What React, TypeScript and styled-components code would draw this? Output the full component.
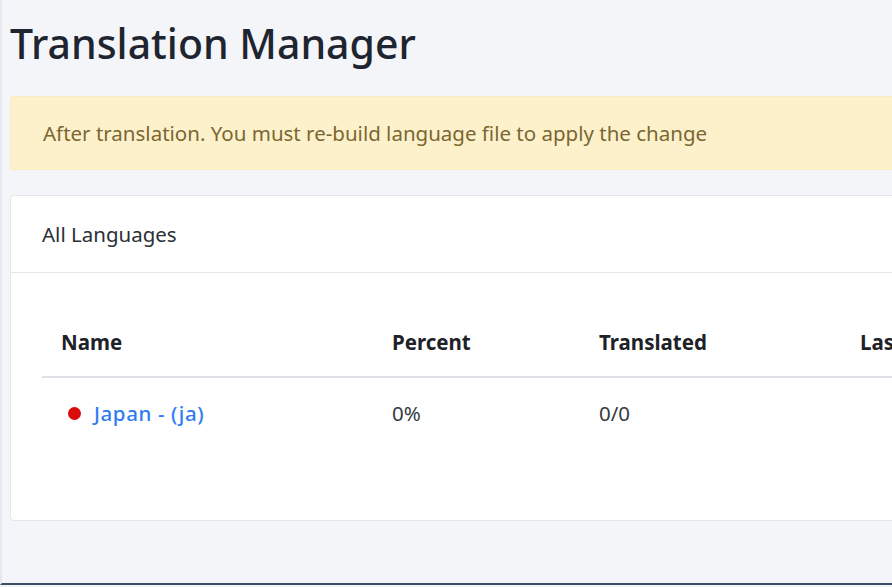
import styled, { createGlobalStyle } from "styled-components";

const GlobalStyle = createGlobalStyle`
  html, body {
    margin: 0;
    padding: 0;
    overflow: hidden;
    background: #f3f5f8;
  }
  body {
    font-family: "Noto Sans", "Open Sans", sans-serif;
    color: #212529;
  }
`;

const Page = styled.div`
  width: 1100px;
  height: 585px;
  box-sizing: border-box;
  border-left: 2px solid #e4e8f0;
  border-bottom: 2px solid #3d4a66;
  padding: 12px 0 0 8px;
`;

const Title = styled.h1`
  margin: 0 0 22px;
  font-size: 41px;
  font-weight: 500;
  line-height: 62px;
  color: #1f2530;
`;

const Alert = styled.div`
  background: #fdf1cc;
  border: 1px solid #fcebbf;
  border-radius: 3px;
  color: #7a6731;
  font-size: 20.5px;
  height: 74px;
  box-sizing: border-box;
  display: flex;
  align-items: center;
  padding: 0 32px;
  margin-bottom: 25px;
`;

const Card = styled.div`
  background: #fff;
  border: 1px solid #e3e6ea;
  border-radius: 4px;
  height: 326px;
  box-sizing: border-box;
`;

const CardHeader = styled.div`
  height: 77px;
  box-sizing: border-box;
  border-bottom: 1px solid #e3e6ea;
  display: flex;
  align-items: center;
  padding: 0 31px;
  font-size: 20.5px;
  color: #2b2f36;
`;

const CardBody = styled.div`
  padding: 34px 31px 0;
`;

const Table = styled.table`
  width: 100%;
  border-collapse: collapse;
  font-size: 20.5px;
`;

const Th = styled.th<{ w?: number }>`
  text-align: left;
  font-weight: 700;
  color: #1e2228;
  padding: 0 19px;
  height: 70px;
  vertical-align: middle;
  border-bottom: 2px solid #dee2e6;
  width: ${(p) => (p.w ? `${p.w}px` : "auto")};
  box-sizing: border-box;
`;

const Td = styled.td`
  padding: 0 19px;
  height: 70px;
  color: #343a40;
  vertical-align: middle;
`;

const LangCell = styled.div`
  display: flex;
  align-items: center;
  gap: 13px;
  padding-left: 7px;
`;

const Dot = styled.span<{ color: string }>`
  width: 13px;
  height: 13px;
  border-radius: 50%;
  background: ${(p) => p.color};
`;

const LangLink = styled.a`
  color: #2f7cf0;
  font-weight: 500;
  letter-spacing: 0.6px;
  text-decoration: none;
`;

export default function App() {
  return (
    <>
      <GlobalStyle />
      <Page>
        <Title>Translation Manager</Title>
        <Alert>After translation. You must re-build language file to apply the change</Alert>
        <Card>
          <CardHeader>All Languages</CardHeader>
          <CardBody>
            <Table>
              <thead>
                <tr>
                  <Th w={331}>Name</Th>
                  <Th w={207}>Percent</Th>
                  <Th w={261}>Translated</Th>
                  <Th>Last Updated</Th>
                </tr>
              </thead>
              <tbody>
                <tr>
                  <Td>
                    <LangCell>
                      <Dot color="#d90b0b" />
                      <LangLink href="#">Japan - (ja)</LangLink>
                    </LangCell>
                  </Td>
                  <Td>0%</Td>
                  <Td>0/0</Td>
                  <Td></Td>
                </tr>
              </tbody>
            </Table>
          </CardBody>
        </Card>
      </Page>
    </>
  );
}
